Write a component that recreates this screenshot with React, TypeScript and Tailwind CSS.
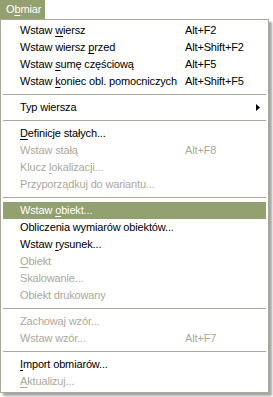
import React from "react";

type Item =
  | { sep: true }
  | {
      sep?: false;
      label: string;
      mn?: number;
      key?: string;
      off?: boolean;
      sub?: boolean;
      hot?: boolean;
    };

const ITEMS: Item[] = [
  { label: "Wstaw wiersz", mn: 6, key: "Alt+F2" },
  { label: "Wstaw wiersz przed", mn: 13, key: "Alt+Shift+F2" },
  { label: "Wstaw sumę częściową", mn: 6, key: "Alt+F5" },
  { label: "Wstaw koniec obl. pomocniczych", mn: 6, key: "Alt+Shift+F5" },
  { sep: true },
  { label: "Typ wiersza", sub: true },
  { sep: true },
  { label: "Definicje stałych...", mn: 0 },
  { label: "Wstaw stałą", key: "Alt+F8", off: true },
  { label: "Klucz lokalizacji...", mn: 6, off: true },
  { label: "Przyporządkuj do wariantu...", off: true },
  { sep: true },
  { label: "Wstaw obiekt...", mn: 6, hot: true },
  { label: "Obliczenia wymiarów obiektów..." },
  { label: "Wstaw rysunek...", mn: 6 },
  { label: "Obiekt", mn: 0, off: true },
  { label: "Skalowanie...", off: true },
  { label: "Obiekt drukowany", off: true },
  { sep: true },
  { label: "Zachowaj wzór...", off: true },
  { label: "Wstaw wzór...", key: "Alt+F7", off: true },
  { sep: true },
  { label: "Import obmiarów...", mn: 0 },
  { label: "Aktualizuj...", mn: 0, off: true },
];

function Label({ text, mn }: { text: string; mn?: number }) {
  if (mn === undefined) return <>{text}</>;
  return (
    <>
      {text.slice(0, mn)}
      <span className="underline underline-offset-2">{text[mn]}</span>
      {text.slice(mn + 1)}
    </>
  );
}

export default function App() {
  return (
    <div className="w-[273px] h-[397px] bg-white font-['Liberation_Sans',sans-serif] text-[11px] leading-none tracking-[-0.15px]">
      <div className="w-[45px] h-[19px] bg-[#93a070] text-white flex items-center pl-[6px]">
        O<span className="underline underline-offset-2">b</span>miar
      </div>
      <div className="w-[269px] border border-[#aca899] bg-white p-[2px] shadow-[3px_3px_2px_rgba(0,0,0,0.35)]">
        {ITEMS.map((it, i) =>
          it.sep ? (
            <div key={i} className="h-[9px] flex items-center">
              <div className="h-px w-full bg-[#aca899]" />
            </div>
          ) : (
            <div
              key={i}
              className={`h-[17px] flex items-center pl-[17px] ${
                it.hot ? "bg-[#93a070] text-white" : it.off ? "text-[#aca899]" : "text-black"
              }`}
            >
              <span className="w-[165px] whitespace-nowrap">
                <Label text={it.label} mn={it.mn} />
              </span>
              <span className="flex-1 whitespace-nowrap">{it.key}</span>
              {it.sub && (
                <svg width="4" height="7" viewBox="0 0 4 7" className="mr-[6px]">
                  <path d="M0 0 L4 3.5 L0 7 Z" fill="#000" />
                </svg>
              )}
            </div>
          )
        )}
      </div>
    </div>
  );
}
